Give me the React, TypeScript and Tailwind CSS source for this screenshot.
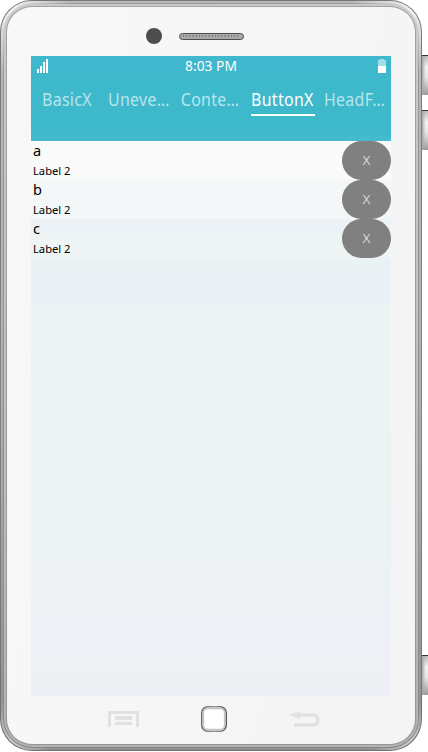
import React from "react";

const tabs = [
  { label: "BasicX", width: "w-[50px]" },
  { label: "Uneve…", width: "w-[60px]" },
  { label: "Conte…", width: "w-[58px]" },
  { label: "ButtonX", width: "w-[64px]", active: true },
  { label: "HeadF…", width: "w-[61px]" },
];

const rows = [
  { title: "a", bg: "bg-[#fafafa]" },
  { title: "b", bg: "bg-[#f3f7f8]" },
  { title: "c", bg: "bg-[linear-gradient(#edf2f6_0_14px,#eff5f5_14px)]" },
];

function StatusBar() {
  return (
    <div className="flex h-5 items-start justify-between pl-1.5 pr-[5px] text-white">
      <svg className="mt-[3px] h-[14px] w-[57px]" viewBox="0 0 57 14" fill="currentColor" shapeRendering="crispEdges">
        <path d="M0 10h2v4H0zM3 7h2v7H3zM6 3h2v11H6zM9 0h2v14H9z" />
      </svg>
      <span className="-ml-px text-[13.8px] leading-5">8:03 PM</span>
      <svg className="mt-[3px] h-[14px] w-[57px]" viewBox="0 0 57 14" fill="currentColor" shapeRendering="crispEdges">
        <path opacity=".52" d="M49 1h2V0h4v1h2v6h-8z" />
        <path d="M49 7h8v7h-8z" />
      </svg>
    </div>
  );
}

function TabBar() {
  return (
    <div className="grid h-[65px] grid-cols-5">
      {tabs.map((t) => (
        <div key={t.label} className="flex justify-center pt-[11px]">
          <div className={`${t.width} flex h-[29px] justify-center whitespace-nowrap text-[18.5px] leading-6 ${t.active ? "border-b-2 border-white text-white" : "text-[#b9e5ec]"}`}>
            <span className="-ml-px shrink-0 scale-x-[0.86] tracking-[0.35px]">{t.label}</span>
          </div>
        </div>
      ))}
    </div>
  );
}

function SideButton({ className }: { className: string }) {
  return <div className={`w-[6px] border-t border-[#333] bg-[linear-gradient(90deg,#aaa,transparent_60%),linear-gradient(#bbb,#f0f0f0_28%,#e6e6e6_55%,#b5b5b5_85%,#999)] ${className}`} />;
}

export default function App() {
  return (
    <div className="flex h-[752px] w-[428px] overflow-hidden bg-white font-['Noto_Sans',sans-serif]">
      <div className="h-[751px] w-[422px] rounded-[32px] bg-[linear-gradient(#777,#858585_50%,#707070)] p-px">
        <div className="h-full rounded-[31px] bg-[radial-gradient(circle_60px_at_10px_10px,#f4f4f4,#ddd_40%,transparent),radial-gradient(circle_60px_at_410px_10px,#f4f4f4,#ddd_40%,transparent),radial-gradient(circle_40px_at_10px_740px,#ccc,transparent),radial-gradient(circle_40px_at_410px_740px,#ccc,transparent),linear-gradient(#b8b8b8,#b0b0b0_50%,#909090)] p-[2px]">
          <div className="h-full rounded-[29px] bg-[radial-gradient(circle_60px_at_10px_10px,#e4e4e4,transparent),radial-gradient(circle_60px_at_407px_10px,#e4e4e4,transparent),linear-gradient(#989898,#8a8a8a)] p-px">
            <div className="h-full rounded-[28px] bg-[linear-gradient(#cacaca,#c0c0c0_50%,#b2b2b2)] p-[2px]">
              <div className="h-full rounded-[26px] bg-[linear-gradient(#a2a2a2,#959595)] p-px">
                <div className="flex h-full flex-col rounded-[25px] bg-[linear-gradient(100deg,#f8f8f8,#f4f4f4)] pl-6 pr-6">
                  <header className="flex h-[49px] items-start pl-[115px] pt-[21px]">
                    <div className="size-4 rounded-full bg-[#4d4d4d]" />
                    <svg className="ml-4 mt-1 h-[9px] w-[67px]" viewBox="0 0 67 9">
                      <rect x="1.5" y="1.5" width="64" height="6" rx="3" fill="#aaa" stroke="#4c4c4c" />
                      <path d="M5 4h57" stroke="#666" strokeWidth="1.5" strokeDasharray="1 2.2" />
                    </svg>
                  </header>
                  <main className="h-[640px] w-[360px] bg-[linear-gradient(#edf2f3,#edf3f3_45%,#edf3f4_70%,#edf1f5_88%,#eeeff4)]">
                    <div className="h-[85px] bg-[linear-gradient(#40b8d0,#3eb8cb_30%,#3eb8cb_86%,#46bbce)]">
                      <StatusBar />
                      <TabBar />
                    </div>
                    {rows.map((r) => (
                      <div key={r.title} className={`flex h-[39px] justify-between ${r.bg}`}>
                        <div className="flex flex-col pl-[2px] text-black">
                          <span className="h-5 text-[14.5px] leading-[19px]">{r.title}</span>
                          <span className="text-[11.2px] leading-[19px]">Label 2</span>
                        </div>
                        <button className="flex h-[39px] w-[49px] items-center justify-center rounded-[20px] bg-[#808080] text-[13.5px] font-light text-[#f5f5f5]">
                          <span className="-mt-px">X</span>
                        </button>
                      </div>
                    ))}
                    <div className="h-[46px] bg-[linear-gradient(#e9f2f4,#ebf0f5)]" />
                  </main>
                  <footer className="flex h-[46px] items-center justify-between pl-[76px] pr-[70px]">
                    <svg className="h-4 w-[32px]" viewBox="0 0 32 16" fill="#e1e1e1" shapeRendering="crispEdges">
                      <path d="M1 0h31v16h-3V3H4v13H1zM8 5h17v4H8zM8 11h17v3H8z" />
                    </svg>
                    <svg className="size-[26px]" viewBox="0 0 26 26" fill="none">
                      <defs><linearGradient id="home"><stop stopColor="#5c5c5c" /><stop offset=".5" stopColor="#999" /><stop offset="1" stopColor="#505050" /></linearGradient></defs>
                      <rect x=".75" y=".75" width="24.5" height="24.5" rx="6" fill="#fff" stroke="url(#home)" strokeWidth="1.4" />
                      <rect x="2.25" y="2.25" width="21.5" height="21.5" rx="4.5" stroke="#c4c4c4" strokeWidth="1.8" />
                    </svg>
                    <svg className="h-[17px] w-[32px]" viewBox="0 0 32 17" fill="none">
                      <path d="M9 4h15a5 5 0 0 1 0 10H5" stroke="#e1e1e1" strokeWidth="3.4" />
                      <path d="M0 4 11 0v8z" fill="#e1e1e1" />
                    </svg>
                  </footer>
                </div>
              </div>
            </div>
          </div>
        </div>
      </div>
      <div className="w-[6px]">
        <SideButton className="mt-[55px] h-10" />
        <SideButton className="mt-[15px] h-10" />
        <SideButton className="mt-[505px] h-10" />
      </div>
    </div>
  );
}
